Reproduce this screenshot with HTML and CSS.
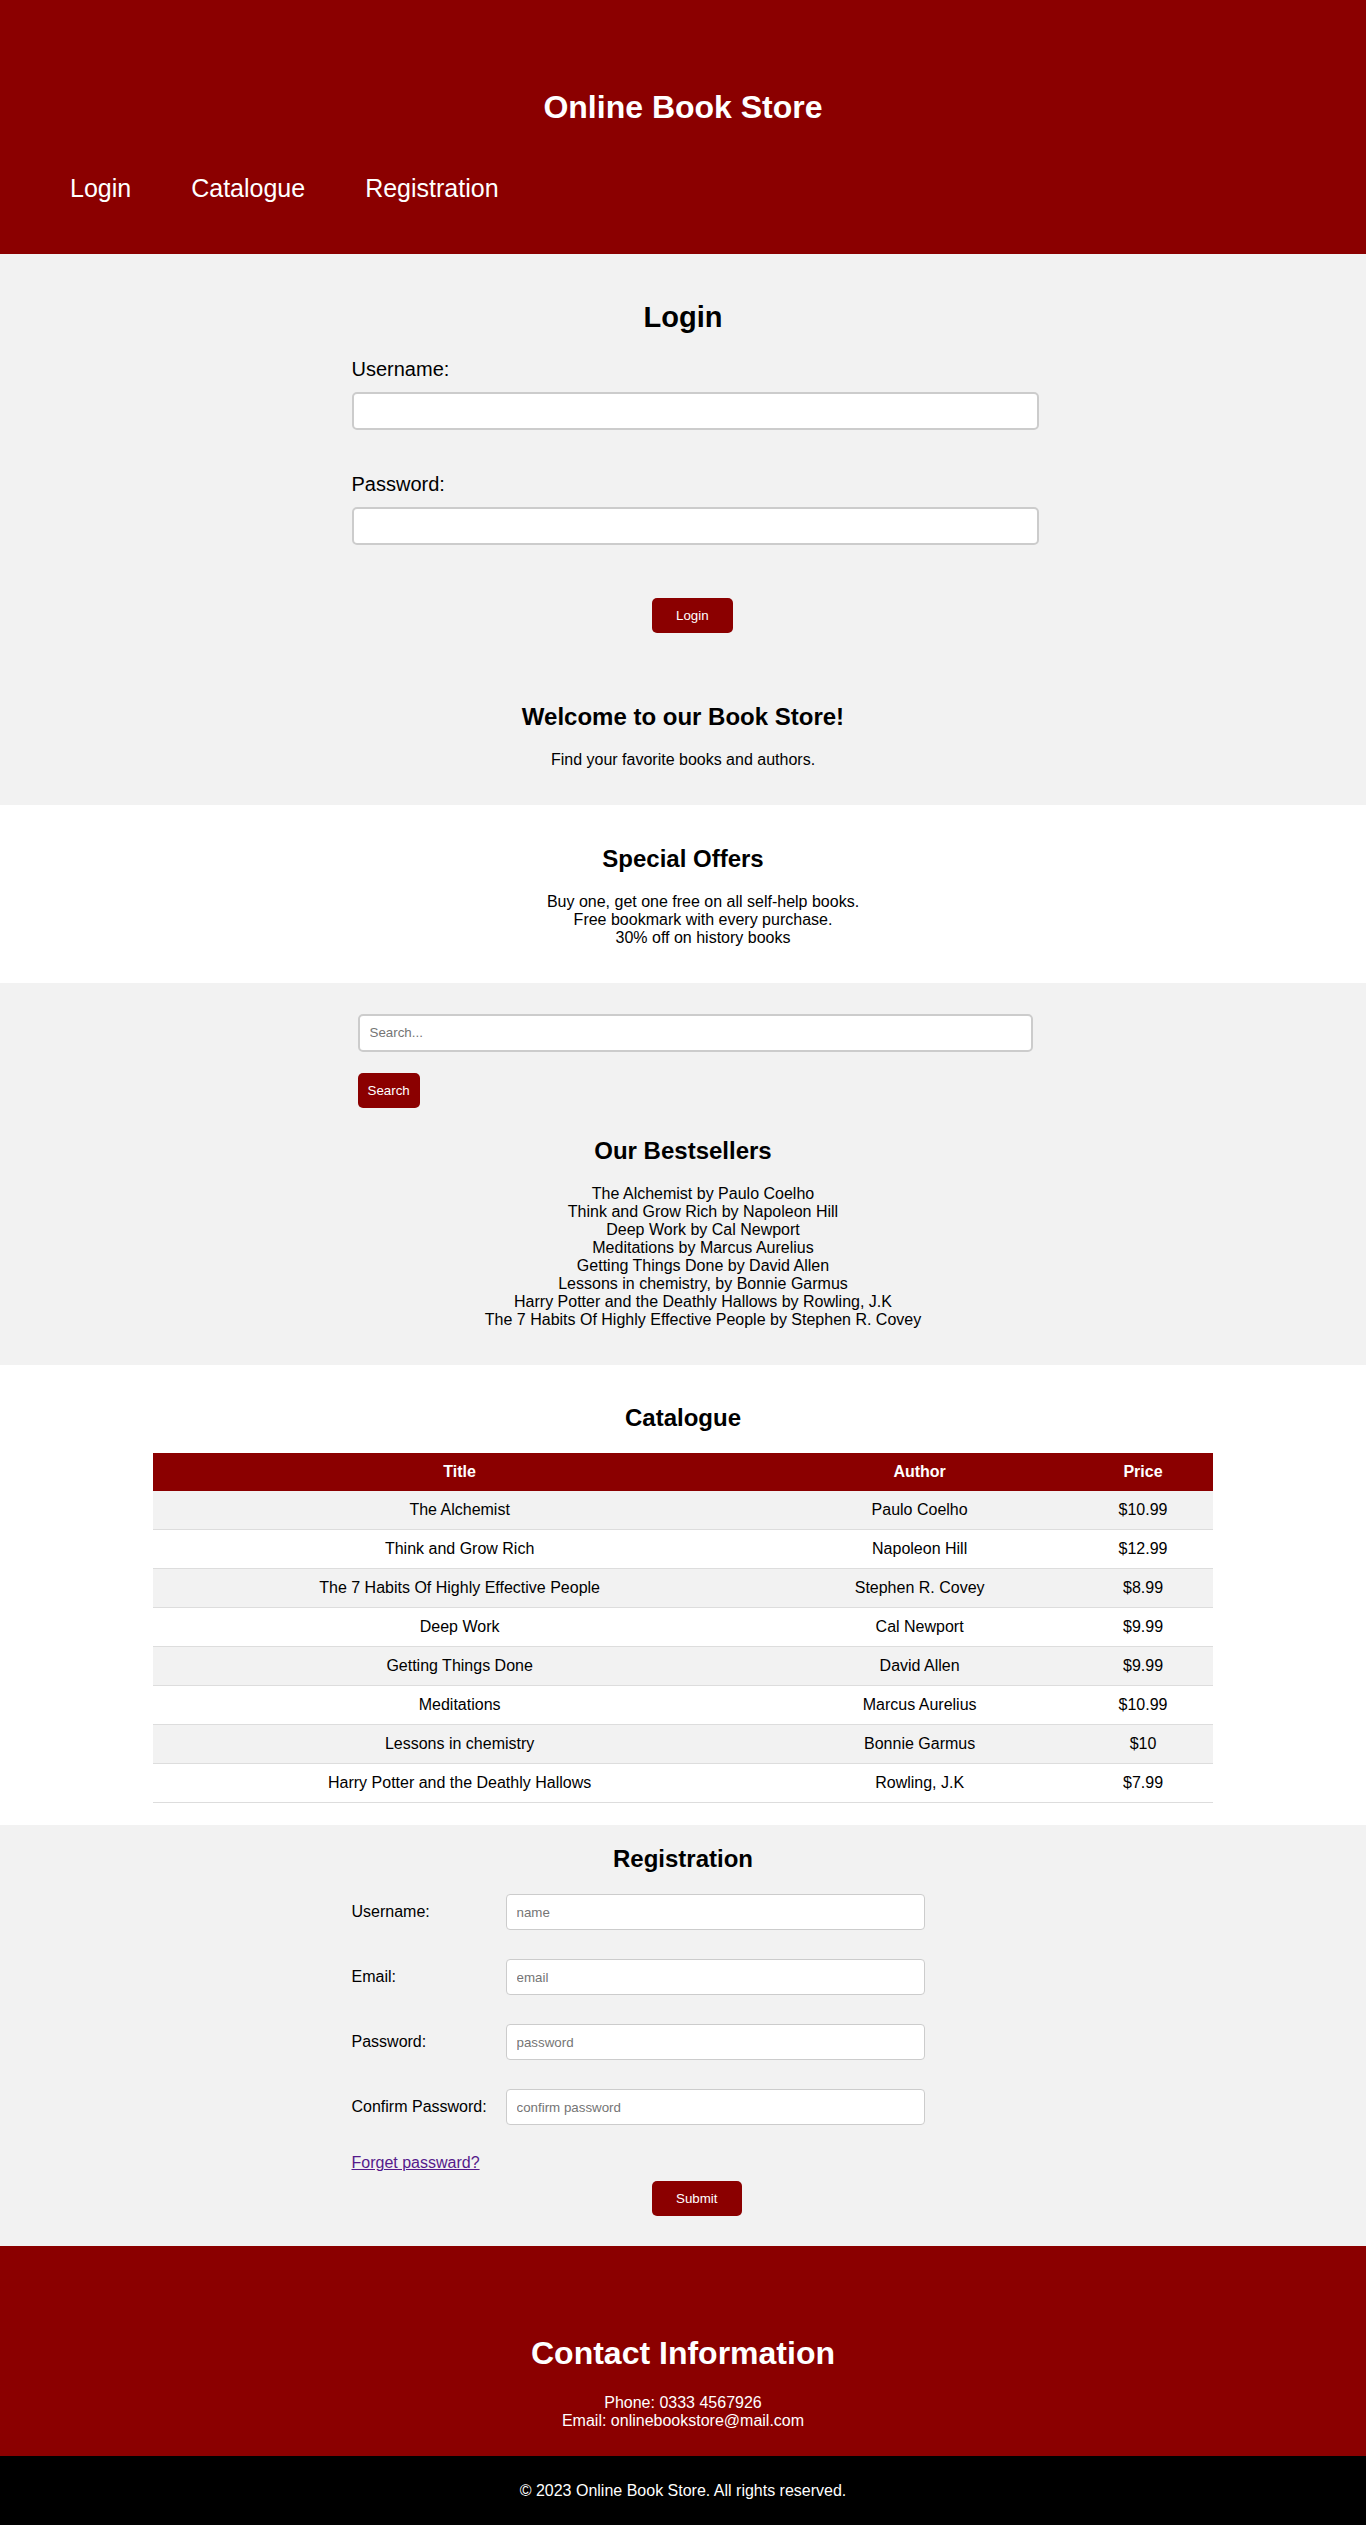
FILE: index.html
```html
<!DOCTYPE html>
<html lang="en">
<head>
<meta charset="utf-8">
<title>Online Book Store</title>
<link rel="stylesheet" href="styles.css">
</head>
<body>
<header class="site-header">
  <h1 class="site-title">Online Book Store</h1>
  <nav>
    <ul class="nav-list">
      <li><a href="#login">Login</a></li>
      <li><a href="#catalogue">Catalogue</a></li>
      <li><a href="#registration">Registration</a></li>
    </ul>
  </nav>
</header>

<section class="panel grey login-panel" id="login">
  <h2 class="login-title">Login</h2>
  <form class="login-form">
    <label class="login-label" for="lu">Username:</label>
    <input class="login-input" id="lu" type="text">
    <label class="login-label" for="lp">Password:</label>
    <input class="login-input" id="lp" type="password">
    <button class="btn btn-wide login-btn" type="button">Login</button>
  </form>
</section>

<section class="panel grey welcome">
  <h2 class="section-title">Welcome to our Book Store!</h2>
  <p class="text">Find your favorite books and authors.</p>
</section>

<section class="panel white">
  <h2 class="section-title">Special Offers</h2>
  <ul class="plain-list">
    <li>Buy one, get one free on all self-help books.</li>
    <li>Free bookmark with every purchase.</li>
    <li>30% off on history books</li>
  </ul>
</section>

<section class="panel grey">
  <form class="search-box">
    <input class="search-input" type="text" placeholder="Search...">
    <button class="btn search-btn" type="button">Search</button>
  </form>
  <h2 class="section-title bestsellers-title">Our Bestsellers</h2>
  <ul class="plain-list">
    <li>The Alchemist by Paulo Coelho</li>
    <li>Think and Grow Rich by Napoleon Hill</li>
    <li>Deep Work by Cal Newport</li>
    <li>Meditations by Marcus Aurelius</li>
    <li>Getting Things Done by David Allen</li>
    <li>Lessons in chemistry, by Bonnie Garmus</li>
    <li>Harry Potter and the Deathly Hallows by Rowling, J.K</li>
    <li>The 7 Habits Of Highly Effective People by Stephen R. Covey</li>
  </ul>
</section>

<section class="panel white catalogue" id="catalogue">
  <h2 class="section-title catalogue-title">Catalogue</h2>
  <table class="book-table">
    <thead>
      <tr><th>Title</th><th>Author</th><th>Price</th></tr>
    </thead>
    <tbody>
      <tr><td>The Alchemist</td><td>Paulo Coelho</td><td>$10.99</td></tr>
      <tr><td>Think and Grow Rich</td><td>Napoleon Hill</td><td>$12.99</td></tr>
      <tr><td>The 7 Habits Of Highly Effective People</td><td>Stephen R. Covey</td><td>$8.99</td></tr>
      <tr><td>Deep Work</td><td>Cal Newport</td><td>$9.99</td></tr>
      <tr><td>Getting Things Done</td><td>David Allen</td><td>$9.99</td></tr>
      <tr><td>Meditations</td><td>Marcus Aurelius</td><td>$10.99</td></tr>
      <tr><td>Lessons in chemistry</td><td>Bonnie Garmus</td><td>$10</td></tr>
      <tr><td>Harry Potter and the Deathly Hallows</td><td>Rowling, J.K</td><td>$7.99</td></tr>
    </tbody>
  </table>
</section>

<section class="panel grey registration" id="registration">
  <h2 class="section-title reg-title">Registration</h2>
  <form class="reg-form">
    <div class="reg-row">
      <label class="reg-label" for="ru">Username:</label>
      <input class="reg-input" id="ru" type="text" placeholder="name">
    </div>
    <div class="reg-row">
      <label class="reg-label" for="re">Email:</label>
      <input class="reg-input" id="re" type="email" placeholder="email">
    </div>
    <div class="reg-row">
      <label class="reg-label" for="rp">Password:</label>
      <input class="reg-input" id="rp" type="password" placeholder="password">
    </div>
    <div class="reg-row">
      <label class="reg-label" for="rc">Confirm Password:</label>
      <input class="reg-input" id="rc" type="password" placeholder="confirm password">
    </div>
    <a class="forgot" href="#">Forget passward?</a>
    <button class="btn btn-wide submit-btn" type="button">Submit</button>
  </form>
</section>

<section class="contact">
  <h1 class="contact-title">Contact Information</h1>
  <p class="text">Phone: 0333 4567926<br>Email: onlinebookstore@mail.com</p>
</section>

<footer class="site-footer">
  <p class="text">&copy; 2023 Online Book Store. All rights reserved.</p>
</footer>
</body>
</html>
```

FILE: styles.css
```css
* {
  box-sizing: content-box;
}

body {
  margin: 0;
  font-family: "Liberation Sans", Arial, sans-serif;
  font-size: 16px;
  line-height: 18px;
  color: #000;
  background: #f2f2f2;
}

/* ---------- header ---------- */
.site-header {
  background: #8b0000;
  color: #fff;
  padding-top: 68px;
}

.site-title {
  margin: 21px 0 0;
  font-size: 32px;
  line-height: 37px;
  font-weight: bold;
  text-align: center;
}

.nav-list {
  display: flex;
  list-style: none;
  margin: 0;
  padding: 48px 0 51px 40px;
  font-size: 25px;
  line-height: 29px;
}

.nav-list li {
  margin: 0 30px;
}

.nav-list a {
  color: #fff;
  text-decoration: none;
}

/* ---------- panels ---------- */
.panel {
  padding: 20px;
  text-align: center;
}

.grey {
  background: #f2f2f2;
}

.white {
  background: #fff;
}

.section-title {
  margin: 19.92px 0;
  font-size: 24px;
  line-height: 28px;
  font-weight: bold;
}

.text {
  margin: 16px 0;
}

.plain-list {
  list-style: none;
  margin: 16px 0;
  padding-left: 40px;
}

/* ---------- login ---------- */
.login-panel {
  padding-bottom: 30px;
}

.login-title {
  margin: 27px 0 24px;
  font-size: 29px;
  line-height: 33px;
  font-weight: bold;
}

.login-form {
  width: 663px;
  margin: 0 auto;
  text-align: left;
}

.login-label {
  display: block;
  font-size: 20px;
  line-height: 23px;
  margin-bottom: 11px;
}

.login-input {
  display: block;
  width: 100%;
  height: 14px;
  padding: 10px;
  border: 2px solid #ccc;
  border-radius: 5px;
  background: #fff;
  margin: 0 0 43px;
  font: 13.333px "Liberation Sans", Arial, sans-serif;
}

.btn {
  display: block;
  box-sizing: border-box;
  height: 35px;
  border: none;
  border-radius: 5px;
  background: #8b0000;
  color: #fff;
  font: 13.333px "Liberation Sans", Arial, sans-serif;
  line-height: 15px;
  cursor: pointer;
}

.btn-wide {
  padding: 0 24.5px;
}

.login-btn {
  margin: 53px 0 0 300px;
}

.welcome {
  padding-top: 20px;
}

/* ---------- search ---------- */
.search-box {
  width: 651px;
  margin: 11px auto 0;
  text-align: left;
}

.search-input {
  display: block;
  width: 100%;
  height: 14px;
  padding: 10px;
  border: 2px solid #ccc;
  border-radius: 5px;
  background: #fff;
  font: 13.333px "Liberation Sans", Arial, sans-serif;
}

.search-input::placeholder,
.reg-input::placeholder {
  color: #757575;
}

.search-btn {
  margin-top: 21px;
  padding: 0 10px;
}

.bestsellers-title {
  margin-top: 29px;
}

/* ---------- catalogue ---------- */
.catalogue {
  padding-bottom: 22px;
}

.catalogue-title {
  margin-bottom: 21px;
}

.book-table {
  width: 80%;
  margin: 0 auto;
  border-collapse: collapse;
}

.book-table th {
  background: #8b0000;
  color: #fff;
  font-weight: bold;
  padding: 10px;
  line-height: 18px;
}

.book-table td {
  padding: 10px;
  line-height: 18px;
  border-bottom: 1px solid #ddd;
}

.book-table tbody tr:nth-child(odd) {
  background: #f2f2f2;
}

.book-table tbody tr:nth-child(even) {
  background: #fff;
}

/* ---------- registration ---------- */
.registration {
  padding-bottom: 30px;
}

.reg-title {
  margin: 0 0 21px;
}

.reg-form {
  width: 663px;
  margin: 0 auto;
  text-align: left;
}

.reg-row {
  display: flex;
  align-items: center;
  margin-bottom: 29px;
}

.reg-label {
  flex: 0 0 154px;
}

.reg-input {
  width: 60%;
  height: 14px;
  padding: 10px;
  border: 1px solid #ccc;
  border-radius: 4px;
  background: #fff;
  font: 13.333px "Liberation Sans", Arial, sans-serif;
}

.forgot {
  display: block;
  width: max-content;
  color: #551a8b;
  text-decoration: underline;
}

.submit-btn {
  margin: 9px 0 0 300px;
}

/* ---------- contact & footer ---------- */
.contact {
  background: #8b0000;
  color: #fff;
  text-align: center;
  padding: 68px 20px 10px;
}

.contact-title {
  margin: 21px 0 21.44px;
  font-size: 32px;
  line-height: 37px;
  font-weight: bold;
}

.site-footer {
  background: #000;
  color: #fff;
  text-align: center;
  padding: 10px;
}
```
